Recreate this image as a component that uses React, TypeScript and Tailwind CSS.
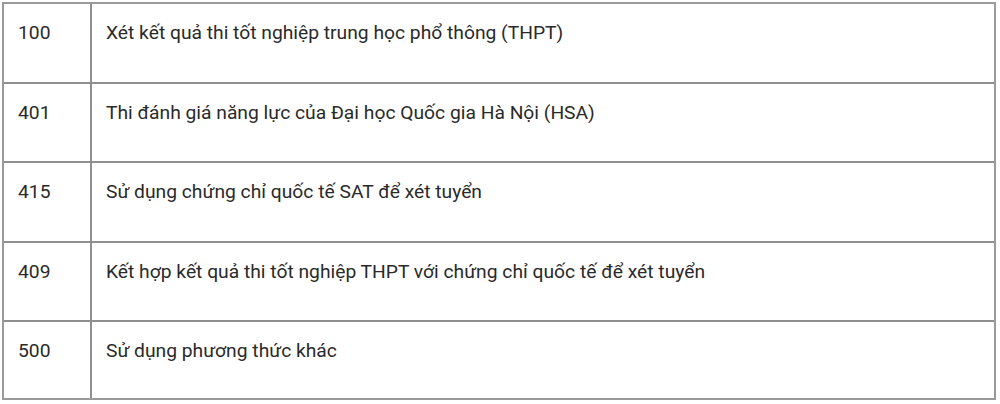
const rows = [
  { code: "100", text: "Xét kết quả thi tốt nghiệp trung học phổ thông (THPT)", h: "h-[80px]" },
  { code: "401", text: "Thi đánh giá năng lực của Đại học Quốc gia Hà Nội (HSA)", h: "h-[79px]" },
  { code: "415", text: "Sử dụng chứng chỉ quốc tế SAT để xét tuyển", h: "h-[80px]" },
  { code: "409", text: "Kết hợp kết quả thi tốt nghiệp THPT với chứng chỉ quốc tế để xét tuyển", h: "h-[79px]" },
  { code: "500", text: "Sử dụng phương thức khác", h: "h-[76px]" },
]

export default function App() {
  return (
    <div className="w-[1000px] h-[404px] bg-white pl-[2px] pt-[2px] font-['Roboto',sans-serif] text-[19.25px] text-[#2a2a2a]">
      <div className="w-[994px] border-2 border-[#9a9a9a]">
        {rows.map((r, i) => (
          <div
            key={r.code}
            className={`flex ${r.h} ${i < rows.length - 1 ? "border-b-2 border-[#8f8f8f]" : ""}`}
          >
            <div className="w-[86px] shrink-0 pl-[14px] pt-[15px] leading-[28px]">{r.code}</div>
            <div className="w-[2px] bg-[#8f8f8f]" />
            <div className="flex-1 pl-[14px] pt-[15px] leading-[28px]">{r.text}</div>
          </div>
        ))}
      </div>
    </div>
  )
}
